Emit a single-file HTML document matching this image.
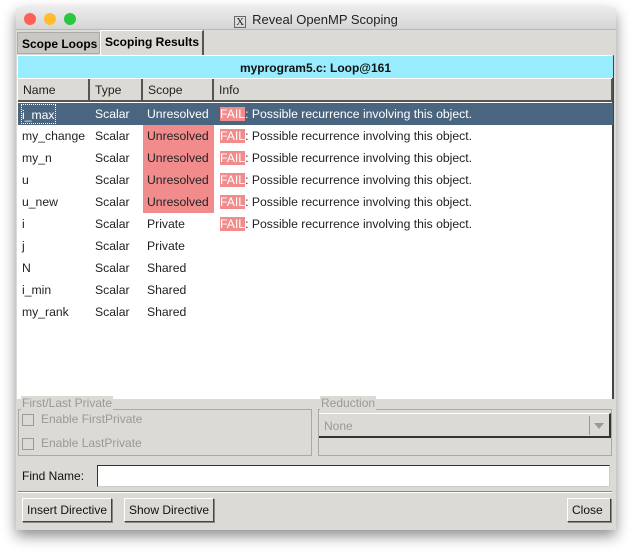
<!DOCTYPE html>
<html><head><style>
*{box-sizing:border-box;margin:0;padding:0}
body{width:632px;height:554px;background:#fff;font-family:"Liberation Sans",sans-serif;font-size:12px;position:relative;overflow:hidden}
.win{position:absolute;left:16px;top:7px;width:600px;height:523px;background:#dcdad5;border-radius:5px 5px 0 0;box-shadow:0 6px 14px rgba(0,0,0,.45);overflow:hidden}
.title{height:23px;background:linear-gradient(#ececec,#d5d5d5);border-bottom:1px solid #b8b8b8;position:relative;text-align:center;line-height:25px;font-size:13px;color:#222}
.dot{position:absolute;top:6px;width:12px;height:12px;border-radius:50%}
.abs{position:absolute}
.row{position:absolute;left:2px;width:595px;height:22px;line-height:22px;font-size:12.2px;color:#222}
.row span{position:absolute;top:0;height:22px}
.fail{background:#f28c8c;color:#fff}
.hdr{position:absolute;top:72px;height:23px;line-height:22px;background:#dcdad5;border-right:2px solid #555;border-bottom:2px solid #555;padding-left:5px;color:#222;font-size:12.2px}
.btn{position:absolute;top:491px;height:24px;line-height:22px;border:1px solid #444;border-top-color:#fff;border-left-color:#fff;box-shadow:1px 1px 0 #888;padding:0 4px;color:#111}
.dis{color:#999}
.cb{position:absolute;width:12px;height:12px;border:1px solid #9a9a9a}
</style></head><body>
<div class="win">
 <div class="title"><div class="dot" style="left:8px;background:#fe5f57"></div><div class="dot" style="left:28px;background:#febc2e"></div><div class="dot" style="left:48px;background:#28c840"></div>
 <span style="display:inline-block;width:12px;height:12px;border:1px solid #666;font-size:11px;line-height:10px;vertical-align:-1px;margin-right:6px;font-family:'Liberation Serif',serif">X</span>Reveal OpenMP Scoping</div>
 <div class="abs" style="left:1px;top:25px;width:83px;height:22px;background:#c9c7c2;border:1px solid #aaa;font-weight:bold;font-size:12px;line-height:22px;padding-left:4px">Scope Loops</div>
 <div class="abs" style="left:84px;top:23px;width:104px;height:25px;background:#dcdad5;border-top:1px solid #fff;border-left:1px solid #fff;border-right:2px solid #555;font-weight:bold;font-size:12px;line-height:22px;padding-left:4px">Scoping Results</div>
 <div class="abs" style="left:1px;top:48px;width:597px;height:344px;background:#fff;border-top:1px solid #fff;border-right:2px solid #444"></div>
 <div class="abs" style="left:2px;top:49px;width:595px;height:22px;background:#97edfd;text-align:center;line-height:24px;font-weight:bold;font-size:12px;color:#111">myprogram5.c: Loop@161</div>
 <div class="hdr" style="left:2px;width:72px">Name</div>
 <div class="hdr" style="left:74px;width:53px">Type</div>
 <div class="hdr" style="left:127px;width:71px">Scope</div>
 <div class="hdr" style="left:198px;width:399px">Info</div>
 <div class="row" style="top:96px;background:#4a6580;color:#fff"><span style="left:4px;outline:1px dotted #fff;line-height:20px;height:18px;top:2px">i_max</span><span style="left:77px">Scalar</span><span style="left:129px">Unresolved</span><span style="left:202px"><b class="fail" style="font-weight:normal">FAIL</b>: Possible recurrence involving this object.</span></div>
 <div class="row" style="top:118px"><span style="left:4px">my_change</span><span style="left:77px">Scalar</span><span style="left:125px;width:71px;padding-left:4px;background:#f28c8c">Unresolved</span><span style="left:202px"><b class="fail" style="font-weight:normal">FAIL</b>: Possible recurrence involving this object.</span></div>
 <div class="row" style="top:140px"><span style="left:4px">my_n</span><span style="left:77px">Scalar</span><span style="left:125px;width:71px;padding-left:4px;background:#f28c8c">Unresolved</span><span style="left:202px"><b class="fail" style="font-weight:normal">FAIL</b>: Possible recurrence involving this object.</span></div>
 <div class="row" style="top:162px"><span style="left:4px">u</span><span style="left:77px">Scalar</span><span style="left:125px;width:71px;padding-left:4px;background:#f28c8c">Unresolved</span><span style="left:202px"><b class="fail" style="font-weight:normal">FAIL</b>: Possible recurrence involving this object.</span></div>
 <div class="row" style="top:184px"><span style="left:4px">u_new</span><span style="left:77px">Scalar</span><span style="left:125px;width:71px;padding-left:4px;background:#f28c8c">Unresolved</span><span style="left:202px"><b class="fail" style="font-weight:normal">FAIL</b>: Possible recurrence involving this object.</span></div>
 <div class="row" style="top:206px"><span style="left:4px">i</span><span style="left:77px">Scalar</span><span style="left:129px">Private</span><span style="left:202px"><b class="fail" style="font-weight:normal">FAIL</b>: Possible recurrence involving this object.</span></div>
 <div class="row" style="top:228px"><span style="left:4px">j</span><span style="left:77px">Scalar</span><span style="left:129px">Private</span></div>
 <div class="row" style="top:250px"><span style="left:4px">N</span><span style="left:77px">Scalar</span><span style="left:129px">Shared</span></div>
 <div class="row" style="top:272px"><span style="left:4px">i_min</span><span style="left:77px">Scalar</span><span style="left:129px">Shared</span></div>
 <div class="row" style="top:294px"><span style="left:4px">my_rank</span><span style="left:77px">Scalar</span><span style="left:129px">Shared</span></div>
 <div class="abs" style="left:2px;top:402px;width:294px;height:47px;border:1px solid #a9a9a9"></div>
 <div class="abs dis" style="left:5px;top:389px;background:#dcdad5;padding:0 1px">First/Last Private</div>
 <div class="cb" style="left:6px;top:407px"></div><div class="abs dis" style="left:25px;top:405px">Enable FirstPrivate</div>
 <div class="cb" style="left:6px;top:431px"></div><div class="abs dis" style="left:25px;top:429px">Enable LastPrivate</div>
 <div class="abs" style="left:302px;top:402px;width:294px;height:47px;border:1px solid #a9a9a9"></div>
 <div class="abs dis" style="left:304px;top:389px;background:#dcdad5;padding:0 1px">Reduction</div>
 <div class="abs" style="left:303px;top:406px;width:292px;height:25px;border-bottom:2px solid #333;border-right:2px solid #333;border-top:1px solid #fff"></div>
 <div class="abs dis" style="left:308px;top:412px">None</div>
 <div class="abs" style="left:573px;top:409px;width:1px;height:19px;background:#999"></div>
 <div class="abs" style="left:578px;top:416px;width:0;height:0;border-left:5px solid transparent;border-right:5px solid transparent;border-top:6px solid #999"></div>
 <div class="abs" style="left:6px;top:462px;color:#111">Find Name:</div>
 <div class="abs" style="left:81px;top:458px;width:513px;height:22px;background:#fff;border:1px solid #333;border-right-color:#ccc;border-bottom-color:#ccc"></div>
 <div class="abs" style="left:2px;top:484px;width:594px;height:2px;border-top:1px solid #888;border-bottom:1px solid #fff"></div>
 <div class="btn" style="left:6px">Insert Directive</div>
 <div class="btn" style="left:108px">Show Directive</div>
 <div class="btn" style="left:551px;width:44px">Close</div>
</div>
</body></html>
